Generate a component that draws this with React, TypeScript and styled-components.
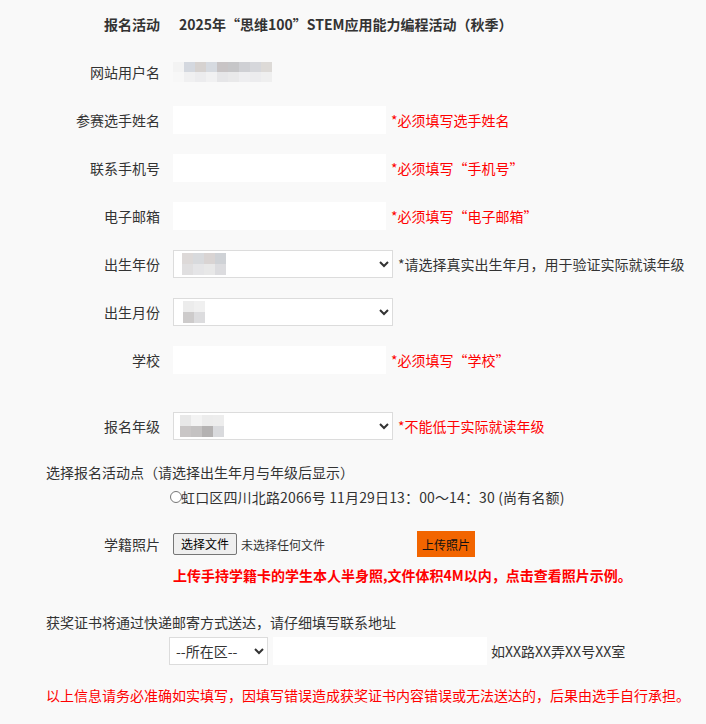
import React from "react";
import styled, { createGlobalStyle } from "styled-components";

const Global = createGlobalStyle`
  html, body { margin: 0; padding: 0; background: #f9f9f9; }
  body {
    font-family: "Noto Sans CJK SC", "Microsoft YaHei", "Liberation Sans", sans-serif;
    font-size: 14px;
    color: #333;
  }
`;

const Page = styled.div`
  width: 706px;
  min-height: 724px;
  display: flex;
  flex-direction: column;
`;

const Row = styled.div<{ $top?: number; $h?: number }>`
  display: flex;
  align-items: center;
  height: ${(p) => p.$h ?? 48}px;
  margin-top: ${(p) => p.$top ?? 0}px;
`;

const Label = styled.div<{ $bold?: boolean }>`
  width: 160px;
  flex-shrink: 0;
  margin-right: 13px;
  text-align: right;
  line-height: 20px;
  font-weight: ${(p) => (p.$bold ? 700 : 400)};
`;

const Title = styled.div`
  font-weight: 700;
  margin-left: 6px;
  line-height: 20px;
`;

const TextInput = styled.input`
  width: 213px;
  height: 28px;
  box-sizing: border-box;
  border: none;
  background: #fff;
  outline: none;
  padding: 0 4px;
  font: inherit;
`;

const SelectWrap = styled.div<{ $w: number }>`
  position: relative;
  width: ${(p) => p.$w}px;
  height: 28px;
  flex-shrink: 0;
`;

const Select = styled.select`
  width: 100%;
  height: 100%;
  box-sizing: border-box;
  border: 1px solid #dcdcdc;
  background: #fff;
  border-radius: 0;
  font-family: inherit;
  font-size: 14px;
  color: #333;
  padding: 0 2px;
  outline: none;
`;

const Hint = styled.span<{ $red?: boolean; $gap?: number }>`
  margin-left: ${(p) => p.$gap ?? 5}px;
  color: ${(p) => (p.$red ? "#ff0000" : "#333")};
  line-height: 20px;
  white-space: nowrap;
`;

const Mosaic = styled.div<{ $cols: number; $cell: number; $rowH?: number }>`
  display: grid;
  grid-template-columns: repeat(${(p) => p.$cols}, ${(p) => p.$cell}px);
  grid-auto-rows: ${(p) => p.$rowH ?? p.$cell}px;
  filter: blur(0.6px);
`;

const Overlay = styled.div<{ $left: number; $top: number }>`
  position: absolute;
  left: ${(p) => p.$left}px;
  top: ${(p) => p.$top}px;
  pointer-events: none;
`;

const Cell = styled.div<{ $c: string }>`
  background: ${(p) => p.$c};
`;

const TextLine = styled.div<{ $top: number; $left: number; $red?: boolean; $bold?: boolean }>`
  margin-top: ${(p) => p.$top}px;
  padding-left: ${(p) => p.$left}px;
  line-height: 20px;
  color: ${(p) => (p.$red ? "#ff0000" : "#333")};
  font-weight: ${(p) => (p.$bold ? 700 : 400)};
  white-space: nowrap;
`;

const RadioLine = styled.label`
  display: flex;
  align-items: center;
  margin-top: 5px;
  padding-left: 170px;
  line-height: 20px;
  white-space: nowrap;
  letter-spacing: 0.15px;
`;

const Radio = styled.input`
  margin: 0 -1px 0 0;
  width: 12px;
  height: 12px;
`;

const FileField = styled.div`
  display: flex;
  align-items: center;
  width: 244px;
  flex-shrink: 0;
`;

const FileButton = styled.button`
  height: 22px;
  box-sizing: border-box;
  padding: 0 7px;
  background: #efefef;
  border: 1px solid #767676;
  border-radius: 2px;
  font-family: inherit;
  font-size: 12px;
  color: #000;
  line-height: 18px;
`;

const FileText = styled.span`
  margin-left: 4px;
  font-size: 12px;
  color: #333;
`;

const UploadButton = styled.button`
  width: 58px;
  height: 26px;
  border: none;
  background: #f26500;
  color: #111;
  font-family: inherit;
  font-size: 12px;
  padding: 0;
`;

const AddressRow = styled.div`
  display: flex;
  align-items: center;
  margin-top: 5px;
  padding-left: 169px;
  height: 28px;
`;

const AddressInput = styled(TextInput)`
  width: 214px;
  margin-left: 5px;
`;

type MosaicSpec = { cols: number; cell: number; rowH?: number; colors: string[] };

const M = ({ spec }: { spec: MosaicSpec }) => (
  <Mosaic $cols={spec.cols} $cell={spec.cell} $rowH={spec.rowH}>
    {spec.colors.map((c, i) => (
      <Cell key={i} $c={c} />
    ))}
  </Mosaic>
);

const userMosaic: MosaicSpec = {
  cols: 9,
  cell: 11,
  rowH: 10,
  colors: [
    "#f3f3f3", "#d4d8df", "#d6d2d0", "#d6dae0", "#c8c4c5", "#c6c6c8", "#cfd0d4", "#d6d7db", "#dddad7",
    "#f7f7f7", "#f0f0f1", "#ececee", "#f1f1f2", "#e6e6e8", "#e9e9ea", "#eeeef0", "#ececee", "#efefef",
  ],
};

const yearMosaic: MosaicSpec = {
  cols: 4,
  cell: 11,
  colors: ["#ddd9d8", "#d8dadd", "#d9d4d3", "#cfd2d6", "#e0dfe0", "#e5e5e7", "#e8e8e8", "#dcdcdf"],
};

const monthMosaic: MosaicSpec = {
  cols: 2,
  cell: 11,
  colors: ["#ececec", "#f0f0f0", "#cdcbcb", "#dcdcde"],
};

const gradeMosaic: MosaicSpec = {
  cols: 4,
  cell: 11,
  colors: ["#e8e8e8", "#f3f3f3", "#ececec", "#ededed", "#c9c6c6", "#c4c2c2", "#b4b2b2", "#d9dadd"],
};

const BlurSelect = ({ spec, left }: { spec: MosaicSpec; left: number }) => (
  <SelectWrap $w={220}>
    <Select defaultValue="">
      <option value=""></option>
    </Select>
    <Overlay $left={left} $top={3}>
      <M spec={spec} />
    </Overlay>
  </SelectWrap>
);

export default function App() {
  return (
    <Page>
      <Global />
      <Row>
        <Label $bold>报名活动</Label>
        <Title>2025年“思维100”STEM应用能力编程活动（秋季）</Title>
      </Row>
      <Row>
        <Label>网站用户名</Label>
        <M spec={userMosaic} />
      </Row>
      <Row>
        <Label>参赛选手姓名</Label>
        <TextInput />
        <Hint $red>*必须填写选手姓名</Hint>
      </Row>
      <Row>
        <Label>联系手机号</Label>
        <TextInput />
        <Hint $red>*必须填写“手机号”</Hint>
      </Row>
      <Row>
        <Label>电子邮箱</Label>
        <TextInput />
        <Hint $red>*必须填写“电子邮箱”</Hint>
      </Row>
      <Row>
        <Label>出生年份</Label>
        <BlurSelect spec={yearMosaic} left={9} />
        <Hint>*请选择真实出生年月，用于验证实际就读年级</Hint>
      </Row>
      <Row>
        <Label>出生月份</Label>
        <BlurSelect spec={monthMosaic} left={10} />
      </Row>
      <Row>
        <Label>学校</Label>
        <TextInput />
        <Hint $red>*必须填写“学校”</Hint>
      </Row>
      <Row $top={18}>
        <Label>报名年级</Label>
        <BlurSelect spec={gradeMosaic} left={7} />
        <Hint $red>*不能低于实际就读年级</Hint>
      </Row>
      <TextLine $top={12} $left={46}>
        选择报名活动点（请选择出生年月与年级后显示）
      </TextLine>
      <RadioLine>
        <Radio type="radio" name="site" />
        虹口区四川北路2066号 11月29日13：00～14：30 (尚有名额)
      </RadioLine>
      <Row $top={22} $h={30}>
        <Label>学籍照片</Label>
        <FileField>
          <FileButton type="button">选择文件</FileButton>
          <FileText>未选择任何文件</FileText>
        </FileField>
        <UploadButton type="button">上传照片</UploadButton>
      </Row>
      <TextLine $top={6} $left={173} $red $bold>
        上传手持学籍卡的学生本人半身照,文件体积4M以内，点击查看照片示例。
      </TextLine>
      <TextLine $top={27} $left={46}>
        获奖证书将通过快递邮寄方式送达，请仔细填写联系地址
      </TextLine>
      <AddressRow>
        <SelectWrap $w={99}>
          <Select defaultValue="">
            <option value="">--所在区--</option>
          </Select>
        </SelectWrap>
        <AddressInput />
        <Hint $gap={4}>如XX路XX弄XX号XX室</Hint>
      </AddressRow>
      <TextLine $top={20} $left={46} $red>
        以上信息请务必准确如实填写，因填写错误造成获奖证书内容错误或无法送达的，后果由选手自行承担。
      </TextLine>
    </Page>
  );
}
